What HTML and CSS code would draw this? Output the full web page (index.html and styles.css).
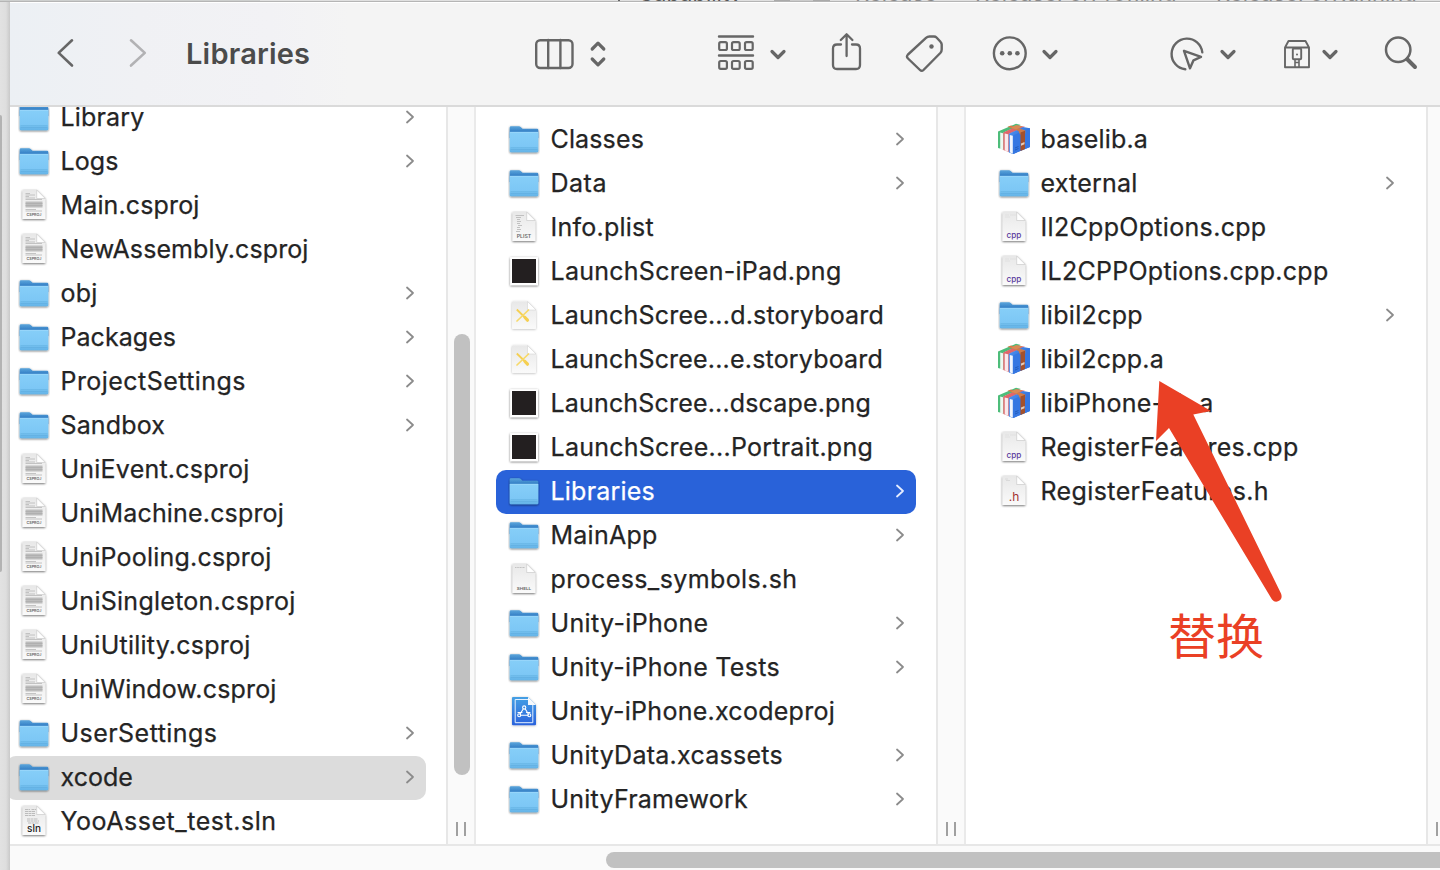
FILE: index.html
```html
<!DOCTYPE html>
<html lang="en">
<head>
<meta charset="utf-8">
<title>Libraries</title>
<link rel="stylesheet" href="styles.css">
</head>
<body>
<svg class="defs" aria-hidden="true">
  <defs>
    <linearGradient id="folderFront" x1="0" y1="0" x2="0" y2="1"><stop offset="0" stop-color="#86cef8"/><stop offset=".75" stop-color="#7cc7f5"/><stop offset="1" stop-color="#62b2e6"/></linearGradient>
    <linearGradient id="folderBack" x1="0" y1="0" x2="0" y2="1"><stop offset="0" stop-color="#5ba6dc"/><stop offset=".45" stop-color="#3580c6"/></linearGradient>
    <linearGradient id="paper" x1="0" y1="0" x2="0" y2="1"><stop offset="0" stop-color="#e8e8e8"/><stop offset="1" stop-color="#fafafa"/></linearGradient>
    <linearGradient id="proj" x1="0" y1="0" x2="0" y2="1"><stop offset="0" stop-color="#45a0e4"/><stop offset="1" stop-color="#2a62dc"/></linearGradient>
    <linearGradient id="blueBook" x1="0" y1="0" x2="1" y2="1"><stop offset="0" stop-color="#4e92f0"/><stop offset="1" stop-color="#2360cc"/></linearGradient>
    <filter id="drop" x="-20%" y="-20%" width="140%" height="150%"><feDropShadow dx="0" dy=".8" stdDeviation=".8" flood-color="#000" flood-opacity=".6"/></filter>
    <filter id="softdrop" x="-20%" y="-20%" width="140%" height="150%"><feDropShadow dx="0" dy=".5" stdDeviation=".8" flood-color="#000" flood-opacity=".28"/></filter>
    <g id="sheet">
      <path d="M4.500 6H18.700L27.300 14.500V35H4.500Z" fill="url(#paper)" filter="url(#drop)"/>
      <path d="M18.700 6V14.500H27.300Z" fill="#fff" stroke="#c4c4c4" stroke-width=".6"/>
    </g>
    <symbol id="folder" viewBox="0 0 32 44">
      <g filter="url(#drop)">
        <path d="M1.700 9.500Q1.700 8.200 3 8.200H11Q12 8.200 12.700 9L14.500 10.800H29Q30.300 10.800 30.300 12V20H1.700Z" fill="url(#folderBack)"/>
        <path d="M1.700 14H30.300V33Q30.300 34.300 29 34.300H3Q1.700 34.300 1.700 33Z" fill="url(#folderFront)"/>
      </g>
      <path d="M2 14.300H30" stroke="#9dd8fb" stroke-width=".9"/>
      <path d="M2.500 29.800H29.500M2.500 31.600H29.500" stroke="#5ba8da" stroke-width=".6"/>
    </symbol>
    <symbol id="csproj" viewBox="0 0 32 44"><use href="#sheet"/>
      <path d="M7.500 9.500H12M7.500 11H17M7.500 12.500H11M7.500 14H17M7.500 15.500H24M7.500 25.500H18M7.500 27H24" stroke="#bdbdbd" stroke-width=".9"/>
      <path d="M7.500 17.500H24.500V23.500H7.500Z" fill="#bdbdbd"/><path d="M7.500 19.500H24.500M7.500 21.500H24.500" stroke="#a8a8a8" stroke-width=".6"/>
      <text x="16" y="32" class="tag-text small" textLength="15" lengthAdjust="spacingAndGlyphs">CSPROJ</text></symbol>
    <symbol id="sln" viewBox="0 0 32 44"><use href="#sheet"/>
      <path d="M7 9.500H12M13.500 9.500H18M7 11.500H17.500M7 13.500H17M7 15.500H17.500M9 19H20M9 21H21M10 23H21" stroke="#bcbcbc" stroke-width="1.200" stroke-dasharray="3 .5"/>
      <text x="16" y="32" class="sln-text">sln</text></symbol>
    <symbol id="plist" viewBox="0 0 32 44"><use href="#sheet"/>
      <path d="M7.500 9.500H16M8 11.500H13M9 13.500H12M9 15.500H13M9 17.500H12M10 19.500H14M9 21.500H12M9 23.500H13M8 25.500H12" stroke="#bbb" stroke-width=".9"/>
      <text x="16" y="32.200" class="tag-text" textLength="14.500" lengthAdjust="spacingAndGlyphs">PLIST</text></symbol>
    <symbol id="shell" viewBox="0 0 32 44"><use href="#sheet"/><path d="M7 9.500H17" stroke="#c2c2c2" stroke-width="1" stroke-dasharray="1.200 .4"/>
      <text x="16" y="32" class="tag-text small" textLength="14.500" lengthAdjust="spacingAndGlyphs">SHELL</text></symbol>
    <symbol id="cpp" viewBox="0 0 32 44"><use href="#sheet"/><path d="M7 9H11M12 9H18M7 11H12" stroke="#dedede" stroke-width=".8"/><text x="16" y="32" class="cpp-text">cpp</text></symbol>
    <symbol id="header" viewBox="0 0 32 44"><use href="#sheet"/><path d="M7 9H10M8 10.500H12" stroke="#d5d5d5" stroke-width=".8"/><text x="16" y="31.300" class="h-text">.h</text></symbol>
    <symbol id="png" viewBox="0 0 32 44"><path d="M2.200 7.200H30V35.200H2.200Z" fill="#fff" filter="url(#drop)"/><path d="M4 9H28V33H4Z" fill="#231f20"/></symbol>
    <symbol id="story" viewBox="0 0 32 44">
      <path d="M5 7.500H19.500L28 16V34Q28 35 27 35H5Q4 35 4 34V8.500Q4 7.500 5 7.500Z" fill="url(#paper)" filter="url(#softdrop)"/>
      <path d="M19.500 7.500V16H28Z" fill="#fff" stroke="#ccc" stroke-width=".5"/>
      <path d="M8.800 15.500L17 23.500" stroke="#f5cf51" stroke-width="1.800"/><path d="M17 23.500L19.500 26.200" stroke="#f5cf51" stroke-width="3.200" stroke-linecap="round"/>
      <path d="M20.500 16L9 27" stroke="#f7d968" stroke-width="1.700" stroke-linecap="round"/></symbol>
    <symbol id="xproj" viewBox="0 0 32 44">
      <path d="M5 7H20L28 15V34.200Q28 35.200 27 35.200H5Q4 35.200 4 34.200V8Q4 7 5 7Z" fill="url(#proj)" filter="url(#softdrop)"/>
      <path d="M20 9.500H7.200V32.700H24.800V15" fill="none" stroke="#e3f0ff" stroke-width="1"/>
      <path d="M20 7V15H28Z" fill="#f7f9fc"/>
      <g fill="none" stroke="#fff" stroke-width="1.100" stroke-linecap="round"><path d="M15.200 19L12 24.200M17.300 19L20.500 24.200M12.500 25.300H20"/><circle cx="16.200" cy="17.500" r="1.600"/><circle cx="11.200" cy="25.300" r="1.500"/><circle cx="21.300" cy="25.300" r="1.500"/><path d="M10 22.500H14M18.500 22.500H22"/></g></symbol>
    <symbol id="books" viewBox="0 0 32 44">
      <path d="M0 13.500L18 5.700L23 7L5.500 14.500V31.500L0 30Z" fill="#4dbd7a"/>
      <path d="M2.200 14.500L5 15.200V31.500L2.200 31Z" fill="#edf8f1"/>
      <path d="M5.300 14.500L20 7.500L27 8.800L10.800 16V34L5.300 32Z" fill="#e0666b"/>
      <path d="M6.700 15.500L10 16.300V33.500L6.700 32.600Z" fill="#f9e9eb"/>
      <path d="M10.800 15.800L25 9L32 10.200V29L15.300 36L10.800 34.500Z" fill="url(#blueBook)"/>
      <path d="M11.800 17L14.800 17.800V35.500L11.800 34.500Z" fill="#f0f5fd"/>
      <path d="M15.300 17.200L32 10.200V29L15.300 36Z" fill="#3577e2"/>
      <path d="M9.500 8.800L13 7.400L27.300 12.500V15.500L22 16.500L20.500 13Z" fill="#cf7b48"/>
      <path d="M18 7L24.500 8.500L18 11.500L13 9.800Z" fill="#d98a55"/>
      <path d="M22.500 14.500L27 12.700V31L22.500 33Z" fill="#a3512c"/>
      <path d="M23 25.500L26.500 24V26.300L23 27.800Z" fill="#e4ccb9"/>
      <path d="M17 30L20.500 28.500M17 32L20.500 30.500" stroke="#174faa" stroke-width=".7"/></symbol>
  </defs>
</svg>

<div class="backdrop">
  <div class="back-top"><i class="bt-line"></i><span class="bt bt-a">Capability</span><i class="bt-pill"></i><span class="bt bt-b">Release</span><span class="bt bt-c">ReleaseForProfiling</span><span class="bt bt-d">ReleaseForRunning</span></div>
  <div class="back-body">
    <div class="back-left"></div>
    <main class="window">
      <header class="toolbar">
        <svg class="tb" width="20" height="32" viewBox="55 37 20 32"><path d="M72 40.300L58.700 52.900L72 65.500" stroke-width="2.600"/></svg>
        <svg class="tb fwd" width="20" height="32" viewBox="128 37 20 32"><path d="M131 40.300L144.800 52.900L131 65.500" stroke-width="2.600"/></svg>
        <h1 class="title">Libraries</h1>
        <svg class="tb view" width="76" height="40" viewBox="532 33 76 40"><rect x="536.200" y="40.200" width="36.300" height="27.800" rx="4"/><path d="M548.200 40V68M560.400 40V68"/><path d="M592.200 49L598 43.200L603.800 49M592.200 59L598 64.800L603.800 59" stroke-width="3.200"/></svg>
        <svg class="tb group" width="74" height="40" viewBox="715 33 74 40"><path d="M719 36.500H753M719 55.500H753"/><g stroke-width="2.200"><rect x="719.200" y="42.200" width="7.700" height="7.800" rx="1.600"/><rect x="732" y="42.200" width="7.700" height="7.800" rx="1.600"/><rect x="745" y="42.200" width="7.700" height="7.800" rx="1.600"/><rect x="719.200" y="61" width="7.700" height="7.800" rx="1.600"/><rect x="732" y="61" width="7.700" height="7.800" rx="1.600"/><rect x="745" y="61" width="7.700" height="7.800" rx="1.600"/></g><path d="M772 51.500L778 57.500L784 51.500" stroke-width="3.200"/></svg>
        <svg class="tb share" width="34" height="44" viewBox="830 31 34 44"><path d="M841 44.500H837Q833 44.500 833 48.500V65Q833 69 837 69H856Q860 69 860 65V48.500Q860 44.500 856 44.500H852M846.600 56V35M840.800 40L846.600 34.300L852.400 40" stroke-width="2.300"/></svg>
        <svg class="tb label" width="42" height="44" viewBox="904 31 42 44"><path d="M927 37.800Q928.500 36.500 930.500 36.500H935Q936.500 36.500 937.500 37.500L941.500 41.800Q942.700 43 942.700 44.500V49.500Q942.700 51.500 941.300 53L924.500 70Q922.700 71.700 921 70L909 58.500Q907 56.500 909 54.500Z"/><circle cx="932.500" cy="46.500" r="2.200" fill="#666" stroke="none"/></svg>
        <svg class="tb more" width="72" height="44" viewBox="990 31 72 44"><circle cx="1009.800" cy="53.300" r="15.900"/><g fill="#666" stroke="none"><circle cx="1002.200" cy="53.300" r="2.300"/><circle cx="1009.800" cy="53.300" r="2.300"/><circle cx="1017.400" cy="53.300" r="2.300"/></g><path d="M1044 51.500L1050 57.500L1056 51.500" stroke-width="3.200"/></svg>
        <svg class="tb action" width="72" height="44" viewBox="1167 31 72 44"><path d="M1185.300 69.300A15.400 15.400 0 1 1 1202.300 52.300M1184 50.800L1201 56.900L1193.500 60.300L1190 68.300Z"/><path d="M1222 51.500L1228 57.500L1234 51.500" stroke-width="3.200"/></svg>
        <svg class="tb zip" width="60" height="44" viewBox="1281 31 60 44"><g stroke-width="1.900"><path d="M1285 47.500L1288.500 41H1305.500L1309 47.500V67.200H1285ZM1285 47.500H1309"/><rect x="1292.800" y="48.500" width="8.400" height="10.800" rx="1"/><path d="M1295 60V67M1299 60V67M1295 62.500H1299" stroke-width="1.600"/></g><circle cx="1297" cy="54.600" r="1" fill="#666" stroke="none"/><path d="M1324 51.500L1330 57.500L1336 51.500" stroke-width="3.200"/></svg>
        <svg class="tb search" width="38" height="44" viewBox="1382 31 38 44"><circle cx="1398.200" cy="49.800" r="12.200" stroke-width="2.500"/><path d="M1407.500 59.500L1415 67" stroke-width="4"/></svg>
      </header>
      <section class="columns">
        <div class="column first"><ul class="list" id="project"></ul></div>
        <div class="gutter"><i class="thumb"></i><i class="grip"></i></div>
        <div class="column"><ul class="list" id="build"></ul></div>
        <div class="gutter"><i class="grip"></i></div>
        <div class="column"><ul class="list" id="libs"></ul></div>
        <div class="gutter"><i class="grip"></i></div>
      </section>
      <footer class="hscroll"><i class="hthumb"></i></footer>
    </main>
  </div>
</div>
<svg class="arrow" width="130" height="224" viewBox="1154 379 130 224"><path d="M1159.300 381L1211 411L1193.300 414.500L1281 593.500Q1283 599 1278.500 601Q1275 603 1272 599.500L1169 428L1156 441Z" fill="#ea4025"/></svg>
<div class="note">替换</div>
<script src="app.js"></script>
</body>
</html>
```
FILE: styles.css
```css
* { box-sizing: border-box; }
body { margin: 0; width: 1440px; height: 870px; overflow: hidden; position: relative; font-family: Inter, "Liberation Sans", sans-serif; background: #e0e0e0; }
.defs { position: absolute; width: 0; height: 0; }
.backdrop { display: flex; flex-direction: column; height: 870px; }
.back-top { position: relative; height: 2px; overflow: hidden; background: linear-gradient(90deg, #cdcfce 260px, #e0e0e0 260px); border-bottom: 1px solid #b5b5b5; }
.bt { position: absolute; top: -19px; font-size: 22px; line-height: 24px; color: #888; white-space: nowrap; }
.bt-a { left: 638px; color: #555; }
.bt-b { left: 855px; }
.bt-c { left: 975px; }
.bt-d { left: 1216px; }
.bt-line { position: absolute; left: 618px; top: 0; width: 2px; height: 2px; background: #666; }
.bt-pill { position: absolute; left: 774px; top: 0; width: 56px; height: 2px; background: linear-gradient(90deg, #aaa 16px, #ccc 16px 39px, #aaa 39px); }
.back-body { display: flex; flex: 1; min-height: 0; }
.back-left { width: 10px; background: linear-gradient(90deg, #e2e2e2, #dedede 60%, #c9c9c9); }
.back-left::before { content: ""; display: block; width: 2px; height: 457px; margin-top: 113px; background: #b3b3b3; border-radius: 0 2px 2px 0; }
.window { width: 1430px; display: flex; flex-direction: column; overflow: hidden; background: #fff; }
.toolbar { height: 105px; flex: none; display: flex; align-items: center; border-top: 1px solid #fff; border-bottom: 2px solid #dadada; background: linear-gradient(90deg, #ecf0f4 0, #f0f1f4 130px, #f2f2f5 260px, #f4f4f4 340px); padding: 0 0 2px 45px; }
.tb { flex: none; fill: none; stroke: #666; stroke-width: 2.4; stroke-linecap: round; stroke-linejoin: round; }
.fwd { stroke: #b2b2b4; margin-left: 53px; }
.title { margin: 2px 0 0 38px; width: 140px; font-size: 29px; line-height: 36px; font-weight: 600; color: #4b4b4b; letter-spacing: .2px; white-space: nowrap; }
.view { margin-left: 206px; }
.group { margin-left: 107px; }
.share { margin-left: 41px; }
.label { margin-left: 39px; }
.more { margin-left: 45px; }
.action { margin-left: 105px; }
.zip { margin-left: 42px; }
.search { margin-left: 41px; }
.columns { display: flex; height: 737px; flex: none; }
.column { width: 460px; flex: none; padding-top: 11px; overflow: hidden; }
.column.first { width: 436px; padding-top: 0; }
.first .list { margin: -11px 0 0 -24px; }
.list { list-style: none; margin: 0; padding: 0 20px; width: 460px; }
.row { display: flex; align-items: center; height: 44px; padding: 0 11px 0 12px; border-radius: 10px; color: #242424; font-size: 25px; }
.row.active { background: #2962d9; color: #fff; }
.row.open { background: #dcdcdc; }
.icon { width: 32px; height: 44px; flex: none; }
.name { flex: 1; margin-left: 10.5px; line-height: 40px; height: 42px; white-space: nowrap; -webkit-text-stroke: .25px currentColor; }
.chev { width: 10px; height: 16px; flex: none; margin: -2px 0 0; fill: none; stroke: #8b8b8b; stroke-width: 1.8; stroke-linecap: round; stroke-linejoin: round; }
.active .chev { stroke: #e5edff; }
.gutter { position: relative; width: 30px; flex: none; background: #fafafa; border-left: 2px solid #e7e7e7; border-right: 2px solid #eaeaea; }
.thumb { position: absolute; left: 6px; top: 227px; width: 16px; height: 441px; border-radius: 8px; background: #c1c1c1; }
.grip { position: absolute; left: 8px; bottom: 8px; width: 10px; height: 14px; border: solid #a0a0a0; border-width: 0 2px; }
.hscroll { height: 26px; flex: none; padding: 6px 0 0 596px; border-top: 2px solid #e7e7e7; background: #fafafa; }
.hthumb { display: block; height: 16px; border-radius: 8px 0 0 8px; background: #c1c1c1; }
.arrow { position: absolute; left: 1154px; top: 379px; }
.note { position: absolute; left: 1168px; top: 598px; font: 400 48px/70px "Noto Sans CJK SC", sans-serif; color: #ea4025; white-space: nowrap; }
text { font-family: Inter, sans-serif; text-anchor: middle; }
.tag-text { font-size: 4.6px; font-weight: 600; fill: #666; }
.tag-text.small { font-size: 3.8px; }
.sln-text { font-size: 10px; font-weight: 500; fill: #222; }
.cpp-text { font-size: 8.2px; font-weight: 500; fill: #5a3a9c; }
.h-text { font-size: 12px; fill: #a3302f; }
```
FILE: app.js
```js
// Each entry: name, icon, drawn width of the name, row state.
const lists = {
  project: [
    ["Library", "folder", 84], ["Logs", "folder", 58], ["Main.csproj", "csproj", 139],
    ["NewAssembly.csproj", "csproj", 248], ["obj", "folder", 37], ["Packages", "folder", 115.5],
    ["ProjectSettings", "folder", 185.5], ["Sandbox", "folder", 104.5], ["UniEvent.csproj", "csproj", 189],
    ["UniMachine.csproj", "csproj", 223.5], ["UniPooling.csproj", "csproj", 211],
    ["UniSingleton.csproj", "csproj", 235], ["UniUtility.csproj", "csproj", 190],
    ["UniWindow.csproj", "csproj", 216], ["UserSettings", "folder", 157],
    ["xcode", "folder", 72.5, "open"], ["YooAsset_test.sln", "sln", 216]
  ],
  build: [
    ["Classes", "folder", 93.5], ["Data", "folder", 56.5], ["Info.plist", "plist", 103.5],
    ["LaunchScreen-iPad.png", "png", 291], ["LaunchScree...d.storyboard", "story", 333.5],
    ["LaunchScree...e.storyboard", "story", 332.5], ["LaunchScree...dscape.png", "png", 320.5],
    ["LaunchScree...Portrait.png", "png", 322.5], ["Libraries", "folder", 104.5, "active"],
    ["MainApp", "folder", 107], ["process_symbols.sh", "shell", 247], ["Unity-iPhone", "folder", 158],
    ["Unity-iPhone Tests", "folder", 229.5], ["Unity-iPhone.xcodeproj", "xproj", 284.5],
    ["UnityData.xcassets", "folder", 232.5], ["UnityFramework", "folder", 197.5]
  ],
  libs: [
    ["baselib.a", "books", 107.5], ["external", "folder", 97], ["Il2CppOptions.cpp", "cpp", 226],
    ["IL2CPPOptions.cpp.cpp", "cpp", 288], ["libil2cpp", "folder", 102.5], ["libil2cpp.a", "books", 123.5],
    ["libiPhone-lib.a", "books", 173], ["RegisterFeatures.cpp", "cpp", 258], ["RegisterFeatures.h", "header", 228.5]
  ]
};
const pen = document.createElement("canvas").getContext("2d");
pen.font = "25px Inter";
for (const [id, rows] of Object.entries(lists)) {
  document.getElementById(id).innerHTML = rows.map(([name, icon, width, state]) => {
    const spacing = (width - pen.measureText(name).width) / name.length;
    const chevron = icon === "folder"
      ? '<svg class="chev" viewBox="0 0 10 16"><path d="M2 2.500L8 8L2 13.500"/></svg>' : "";
    return `<li class="row ${state || ""}"><svg class="icon"><use href="#${icon}"/></svg>` +
      `<span class="name" style="letter-spacing:${spacing.toFixed(3)}px">${name}</span>${chevron}</li>`;
  }).join("");
}
```
